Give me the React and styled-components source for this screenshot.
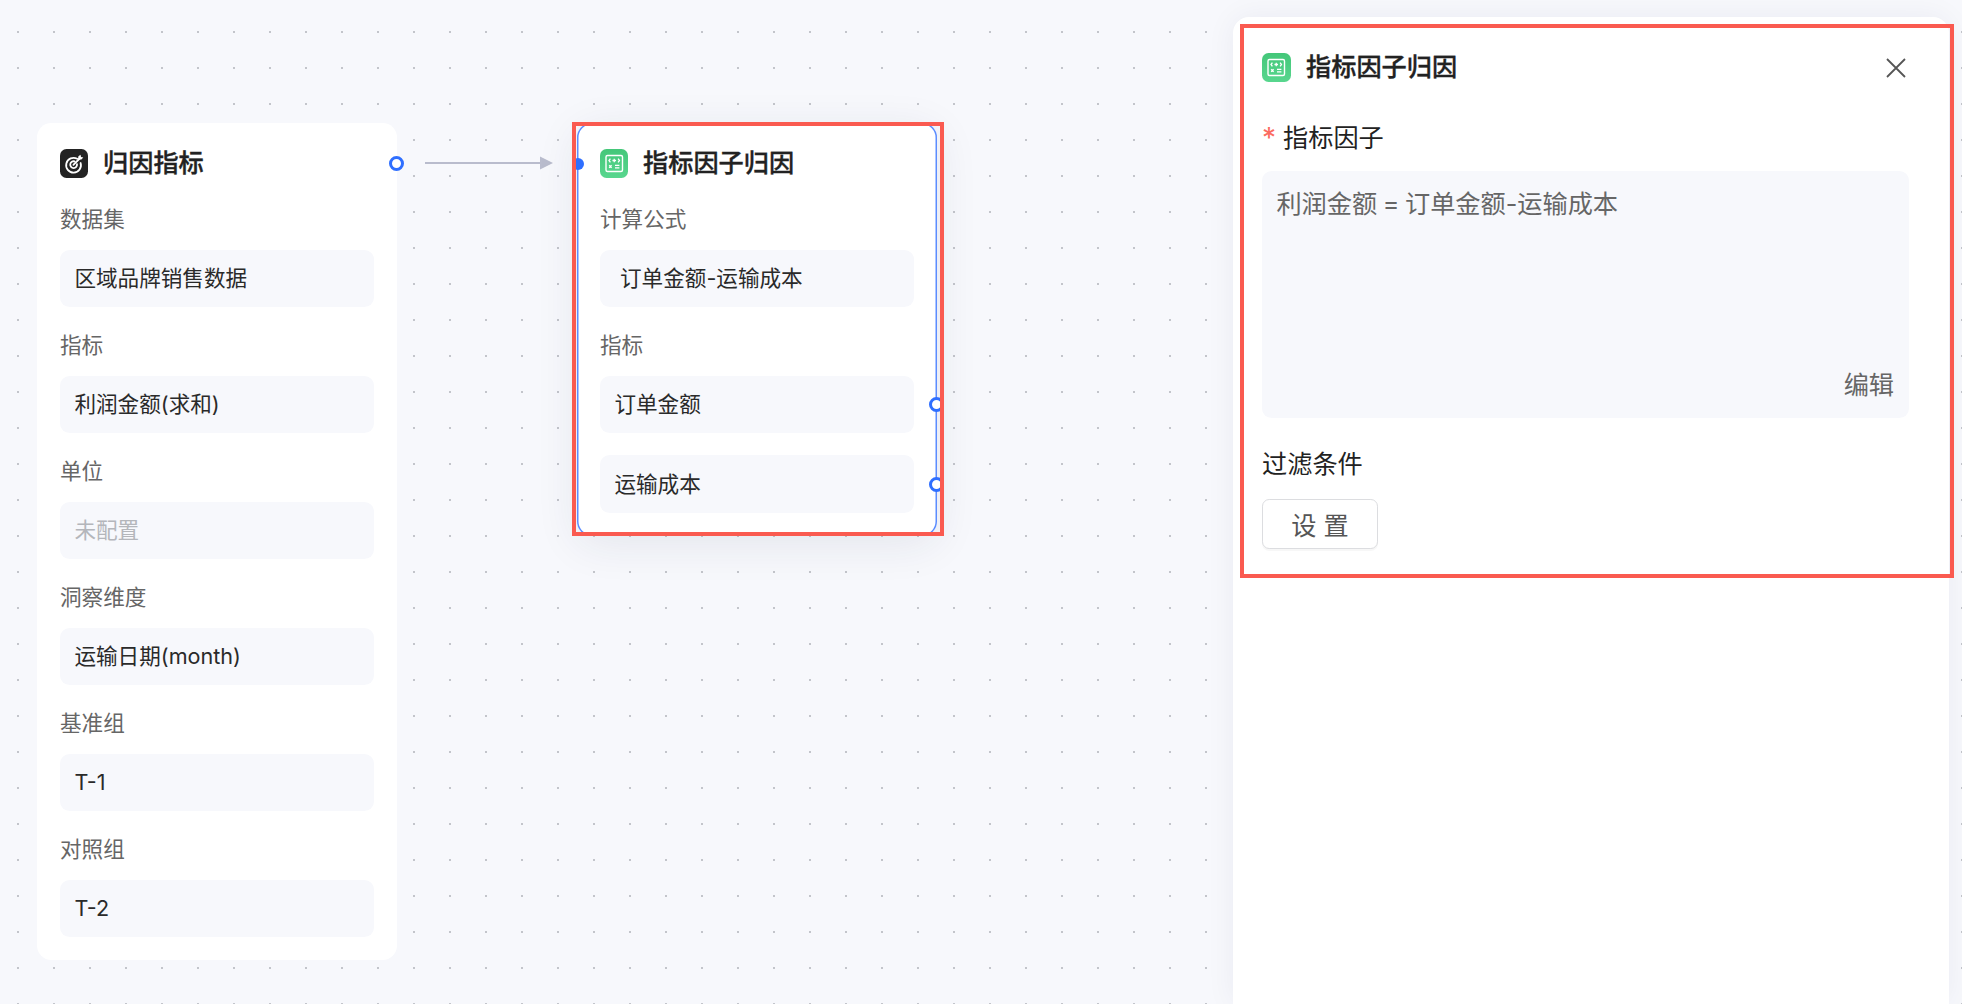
import React from "react";
import styled, { createGlobalStyle } from "styled-components";

const GlobalStyle = createGlobalStyle`
  html, body {
    margin: 0;
    padding: 0;
    height: 100%;
    overflow: hidden;
    font-family: Inter, "Noto Sans CJK SC", sans-serif;
  }
`;

const Canvas = styled.div`
  position: relative;
  width: 1962px;
  height: 1004px;
  overflow: hidden;
  background-color: #f7f8fc;
  background-image: radial-gradient(circle, #c3c5cb 1px, transparent 1.4px);
  background-size: 36px 36px;
  background-position: 0 14px;
`;

const Card = styled.div`
  position: absolute;
  top: 123px;
  left: ${(p) => p.$left}px;
  box-sizing: border-box;
  width: 360px;
  padding: 26px 23px 23px;
  border-radius: 14.4px;
  background: #fff;
  box-shadow: ${(p) =>
    p.$selected
      ? "inset 0 0 0 1.5px #5b8cff, 0 8px 44px rgba(30, 40, 80, 0.09)"
      : "none"};
`;

const Header = styled.div`
  position: relative;
  display: flex;
  align-items: center;
  height: 29px;
  gap: 15px;
`;

const Title = styled.div`
  font-size: 25.2px;
  line-height: 29px;
  font-weight: 500;
  -webkit-text-stroke: 0.35px #222;
  color: #222;
`;

const Fields = styled.div`
  display: flex;
  flex-direction: column;
  gap: 23px;
  margin-top: 26px;
`;

const Field = styled.div`
  display: flex;
  flex-direction: column;
`;

const Label = styled.div`
  margin-bottom: 16px;
  font-size: 21.6px;
  line-height: 30px;
  color: #666;
`;

const Value = styled.div`
  position: relative;
  box-sizing: border-box;
  height: ${(p) => p.$height || 57}px;
  padding-left: ${(p) => p.$indent || 14.4}px;
  border-radius: 9.6px;
  background: #f7f8fc;
  font-size: 21.6px;
  line-height: ${(p) => p.$height || 57}px;
  color: ${(p) => (p.$muted ? "#b4b6bb" : "#2a2a2a")};
`;

const ValueStack = styled.div`
  display: flex;
  flex-direction: column;
  gap: 22px;
`;

const Handle = styled.span`
  position: absolute;
  top: 50%;
  right: -30px;
  box-sizing: border-box;
  width: 15px;
  height: 15px;
  margin-top: -7.5px;
  border: 3px solid #2f6fff;
  border-radius: 50%;
  background: #fff;
`;

const InPort = styled.span`
  position: absolute;
  top: 50%;
  left: -28px;
  width: 12px;
  height: 12px;
  margin-top: -6px;
  border-radius: 50%;
  background: #2f6fff;
`;

const Edge = styled.svg`
  position: absolute;
  left: 425px;
  top: 155px;
`;

const Annotation = styled.div`
  position: absolute;
  left: ${(p) => p.$left}px;
  top: ${(p) => p.$top}px;
  box-sizing: border-box;
  width: ${(p) => p.$width}px;
  height: ${(p) => p.$height}px;
  border: 4px solid #fa5a50;
  pointer-events: none;
`;

const Panel = styled.aside`
  position: absolute;
  left: 1233px;
  top: 17px;
  bottom: 0;
  box-sizing: border-box;
  width: 716px;
  padding: 36px 40px 0 29px;
  border-radius: 16px 16px 0 0;
  background: #fff;
  box-shadow: 0 0 30px rgba(30, 40, 80, 0.06);
`;

const PanelHeader = styled.div`
  display: flex;
  align-items: center;
  height: 29px;
  gap: 15px;
`;

const CloseButton = styled.button`
  display: flex;
  margin: 0 3px 0 auto;
  padding: 0;
  border: 0;
  background: none;
  color: #555;
`;

const FormLabel = styled.div`
  display: flex;
  align-items: center;
  margin-top: ${(p) => p.$top}px;
  font-size: 25.2px;
  line-height: 34px;
  color: #222;
`;

const Star = styled.span`
  width: 21px;
  color: #fb6a60;
  font-size: 28px;
`;

const FormulaBox = styled.div`
  display: flex;
  flex-direction: column;
  justify-content: space-between;
  box-sizing: border-box;
  height: 247px;
  margin-top: 16px;
  padding: 15px 15px 15px 14.4px;
  border-radius: 9.6px;
  background: #f7f8fc;
  font-size: 25.2px;
  line-height: 36px;
  word-spacing: -1.5px;
  color: #666;
`;

const EditLink = styled.span`
  align-self: flex-end;
`;

const SetButton = styled.button`
  display: block;
  box-sizing: border-box;
  width: 116px;
  height: 50px;
  margin-top: 18px;
  padding: 0;
  border: 1.5px solid #dcdde0;
  border-radius: 7.2px;
  background: #fff;
  box-shadow: 0 2px 0 rgba(0, 0, 0, 0.03);
  font-family: inherit;
  font-size: 25.2px;
  letter-spacing: 7px;
  text-indent: 7px;
  color: #555;
`;

const TargetIcon = () => (
  <svg width="28" height="29" viewBox="0 0 28 29">
    <rect width="28" height="29" rx="6.5" fill="#232323" />
    <g fill="none" stroke="#fff" strokeWidth="1.8" strokeLinecap="round">
      <path d="M17.2 9.8A7.4 7.4 0 1 0 20.6 14" />
      <path d="M14.6 12.4a3.4 3.4 0 1 0 2.4 2.8" />
      <path d="M13.4 15.8l5.8-5.8" />
    </g>
    <path d="M18 10.2l.4-3 2.1-1.5.5 2.4 2.3.5-1.9 2-2.8.2z" fill="#fff" />
  </svg>
);

const CalcGlyph = () => (
  <>
    <rect
      x="6"
      y="6.5"
      width="16.5"
      height="16"
      rx="1.5"
      fill="none"
      stroke="#fff"
      strokeWidth="1.4"
    />
    <g fill="none" stroke="#fff" strokeWidth="1.3">
      <path d="M10.4 9.6l-1.4 1.9 1.4 1.9M18.1 9.6l1.4 1.9-1.4 1.9" />
      <path d="M14.25 9.7v3.6M12.45 11.5h3.6" />
      <path d="M9.2 16.2l2.4 2.7M11.6 16.2l-2.4 2.7" />
      <path d="M15 16.3h4.4M15 18.8h4.4" />
    </g>
  </>
);

const FactorIcon = ({ id, width }) => (
  <svg width={width} height="29" viewBox={`0 0 ${width} 29`}>
    <defs>
      <linearGradient id={id} x1="0" y1="0" x2="0" y2="1">
        <stop offset="0" stopColor="#44c779" />
        <stop offset="1" stopColor="#58d68e" />
      </linearGradient>
    </defs>
    <rect width={width} height="29" rx="6.5" fill={`url(#${id})`} />
    <CalcGlyph />
  </svg>
);

const CloseIcon = () => (
  <svg width="20" height="20" viewBox="0 0 20 20">
    <path
      d="M1 1l18 18M19 1L1 19"
      fill="none"
      stroke="currentColor"
      strokeWidth="1.8"
    />
  </svg>
);

const SOURCE_FIELDS = [
  { label: "数据集", value: "区域品牌销售数据" },
  { label: "指标", value: "利润金额(求和)" },
  { label: "单位", value: "未配置", muted: true },
  { label: "洞察维度", value: "运输日期(month)" },
  { label: "基准组", value: "T-1" },
  { label: "对照组", value: "T-2" },
];

export default function App() {
  return (
    <Canvas>
      <GlobalStyle />

      <Card $left={37}>
        <Header>
          <TargetIcon />
          <Title>归因指标</Title>
          <Handle />
        </Header>
        <Fields>
          {SOURCE_FIELDS.map((f) => (
            <Field key={f.label}>
              <Label>{f.label}</Label>
              <Value $muted={f.muted}>{f.value}</Value>
            </Field>
          ))}
        </Fields>
      </Card>

      <Edge width="130" height="16" viewBox="0 0 130 16">
        <path d="M0 8h116" stroke="#b9bccd" strokeWidth="2" />
        <path d="M115 1.5L128 8l-13 6.5z" fill="#b9bccd" />
      </Edge>

      <Card $left={577} $selected>
        <Header>
          <InPort />
          <FactorIcon id="node-green" width={28} />
          <Title>指标因子归因</Title>
        </Header>
        <Fields>
          <Field>
            <Label>计算公式</Label>
            <Value $indent={20}>订单金额-运输成本</Value>
          </Field>
          <Field>
            <Label>指标</Label>
            <ValueStack>
              <Value>
                订单金额
                <Handle />
              </Value>
              <Value $height={58}>
                运输成本
                <Handle />
              </Value>
            </ValueStack>
          </Field>
        </Fields>
      </Card>
      <Annotation $left={572} $top={122} $width={372} $height={414} />

      <Panel>
        <PanelHeader>
          <FactorIcon id="panel-green" width={29} />
          <Title>指标因子归因</Title>
          <CloseButton>
            <CloseIcon />
          </CloseButton>
        </PanelHeader>
        <FormLabel $top={39}>
          <Star>*</Star>指标因子
        </FormLabel>
        <FormulaBox>
          <span>利润金额 = 订单金额-运输成本</span>
          <EditLink>编辑</EditLink>
        </FormulaBox>
        <FormLabel $top={29}>过滤条件</FormLabel>
        <SetButton>设置</SetButton>
      </Panel>
      <Annotation $left={1240} $top={24} $width={714} $height={554} />
    </Canvas>
  );
}
